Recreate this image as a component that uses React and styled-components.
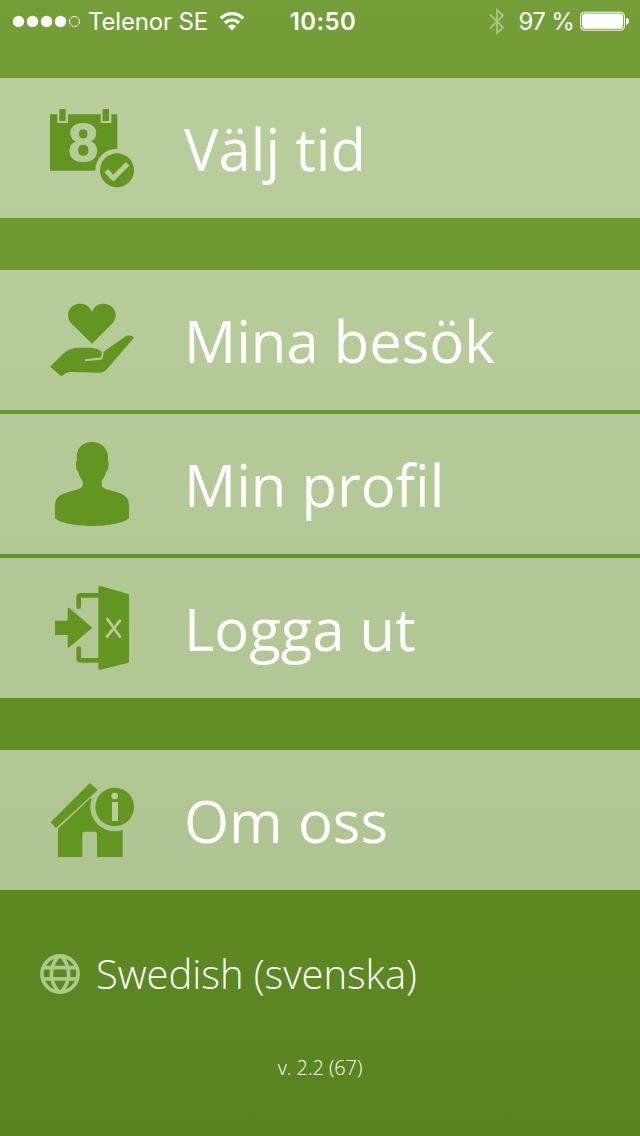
import React from 'react'
import styled, { createGlobalStyle } from 'styled-components'

const theme = {
  icon: '#629621',
  cutout: '#b6cd99',
  text: '#fff',
}

const GlobalStyle = createGlobalStyle`
  body {
    margin: 0;
  }
`

const Screen = styled.div`
  box-sizing: border-box;
  width: 640px;
  height: 1136px;
  overflow: hidden;
  display: flex;
  flex-direction: column;
  color: ${theme.text};
  background: linear-gradient(#749f38, #57841e);
  font-family: 'Open Sans', 'Noto Sans', sans-serif;
`

const StatusBar = styled.header`
  display: grid;
  grid-template-columns: 277px 92px 1fr;
  align-items: center;
  height: 40px;
  margin-bottom: 38px;
  font-family: Inter, 'Liberation Sans', sans-serif;
  font-size: 24px;
  line-height: 40px;
  white-space: nowrap;
`

const StatusGroup = styled.div`
  display: flex;
  align-items: center;
  height: 40px;
  justify-content: ${({ $end }) => ($end ? 'flex-end' : 'flex-start')};
  padding: ${({ $end }) => ($end ? '0 11px 0 0' : '0 0 0 12px')};
`

const StatusText = styled.span`
  padding-top: 2px;
  margin: ${({ $margin }) => $margin || 0};
  letter-spacing: ${({ $spacing }) => $spacing || 0};
`

const Time = styled.div`
  padding-top: 2px;
  text-align: center;
  font-weight: 600;
  letter-spacing: 0.4px;
`

const Menu = styled.nav`
  display: flex;
  flex-direction: column;
  gap: 52px;
`

const MenuGroup = styled.div`
  display: flex;
  flex-direction: column;
  gap: 4px;
`

const MenuItem = styled.a`
  box-sizing: border-box;
  display: flex;
  align-items: center;
  gap: 50px;
  height: 140px;
  padding: 0 50px;
  background: rgba(255, 255, 255, 0.5);
`

const MenuIcon = styled.svg`
  flex: none;
  width: 84px;
  height: 84px;
  fill: ${theme.icon};
`

const Label = styled.span`
  font-size: 58px;
  line-height: 80px;
  padding-top: 1px;
  white-space: nowrap;
`

const Language = styled.div`
  display: flex;
  align-items: center;
  gap: 16px;
  height: 60px;
  margin-top: 54px;
  padding-left: 40px;
  font-size: 40px;
  font-weight: 300;
  line-height: 60px;
  letter-spacing: -0.05px;
`

const Version = styled.footer`
  margin-top: 50px;
  text-align: center;
  font-size: 20px;
  font-weight: 300;
  line-height: 28px;
  letter-spacing: -0.1px;
`

const CalendarIcon = () => (
  <MenuIcon viewBox="60 48 252 252">
    <mask id="calendar">
      <rect x="60" y="48" width="252" height="252" fill="#fff" />
      <path d="M82 48h32v51H82zM212 48h32v51h-32z" fill="#000" />
      <circle cx="261" cy="241" r="65" fill="#000" />
    </mask>
    <path d="M60 73h202v169H60z" mask="url(#calendar)" />
    <path d="M88 57h19v36H88zM218 57h19v36h-19z" />
    <text
      x="160"
      y="213"
      textAnchor="middle"
      fontFamily="Liberation Sans, sans-serif"
      fontWeight="700"
      fontSize="162"
      fill={theme.cutout}
      stroke={theme.cutout}
      strokeWidth="3"
    >
      8
    </text>
    <circle cx="261" cy="241" r="51" />
    <path
      d="M229 242l21 23 43-44"
      fill="none"
      stroke={theme.cutout}
      strokeWidth="15"
      strokeLinejoin="round"
    />
  </MenuIcon>
)

const HandHeartIcon = () => (
  <MenuIcon viewBox="60 24 252 252">
    <path d="M186 161L125 101C116 92 114 84 114 75C114 55 131 41 150 41C168 41 181 51 186 66C191 51 203 41 221 41C241 41 257 56 257 76C257 86 253 94 246 101Z" />
    <path d="M60 230L101 190C113 179 127 173 145 173H180C197 173 209 178 215 185L214 202L165 208L165 214L212 209Q219 208 219 201L221 185L287 139C293 135 307 135 312 143L231 237C224 245 218 248 208 248L124 246Q114 246 108 250L94 259Z" />
  </MenuIcon>
)

const ProfileIcon = () => (
  <MenuIcon viewBox="60 36 252 252">
    <path d="M186 36C211 36 235 54 234 82L233 92Q237 94 236 101L234 117Q233 123 229 124C226 135 221 145 215 153V165C216 178 239 179 259 186C284 193 297 203 297 226V264C286 278 235 288 186 288S85 278 75 264V226C75 202 91 193 115 186C136 179 157 178 158 165V153C151 145 147 135 144 124Q140 122 139 117L138 101Q136 94 141 92L140 82C139 54 160 36 186 36Z" />
  </MenuIcon>
)

const LogoutIcon = () => (
  <MenuIcon viewBox="60 33 252 252">
    <path
      d="M206 61H152Q146 61 146 67V95M146 221V250Q146 256 152 256H206"
      fill="none"
      stroke={theme.icon}
      strokeWidth="14"
      strokeLinecap="round"
    />
    <path d="M75 137H113V101Q113 96 118 99L187 158L118 217Q113 221 113 215V180H75Z" />
    <path d="M205 37Q205 31 211 33L293 56Q297 57 297 61V259Q297 263 293 264L211 284Q205 286 205 280Z" />
    <path
      d="M232 132L270 185M270 137L231 185"
      fill="none"
      stroke={theme.cutout}
      strokeWidth="8"
      strokeLinecap="round"
    />
  </MenuIcon>
)

const HouseInfoIcon = () => (
  <MenuIcon viewBox="60 24 252 252">
    <mask id="house">
      <rect x="60" y="24" width="252" height="252" fill="#fff" />
      <circle cx="254" cy="111" r="73" fill="#000" />
    </mask>
    <g mask="url(#house)">
      <path d="M62 157L180 39L203 60L78 174Z" />
      <path d="M84 176L182 84L278 176V261H201V191Q201 185 195 185H163Q157 185 157 191V261H84Z" />
    </g>
    <circle cx="254" cy="111" r="58" />
    <circle cx="254" cy="78" r="10" fill={theme.cutout} />
    <path d="M246 96h18v57h-18z" fill={theme.cutout} />
  </MenuIcon>
)

const SignalIcon = () => (
  <svg width="70" height="14" viewBox="0 0 70 14" fill="#fff">
    <circle cx="6.5" cy="7.5" r="5.7" />
    <circle cx="20.5" cy="7.5" r="5.7" />
    <circle cx="34.5" cy="7.5" r="5.7" />
    <circle cx="48.5" cy="7.5" r="5.7" />
    <circle cx="62.5" cy="7.5" r="5" fill="none" stroke="#fff" strokeWidth="1" />
  </svg>
)

const WifiIcon = () => (
  <svg width="26" height="20" viewBox="0 0 26 20" fill="none" stroke="#fff" strokeWidth="3.2">
    <path d="M1.8 7.3C8 1 18 1 24.2 7.3" />
    <path d="M6 12C10 8 16 8 20 12" />
    <path d="M13 19.6L8.6 15.2Q13 11.6 17.4 15.2Z" fill="#fff" stroke="none" />
  </svg>
)

const BluetoothIcon = () => (
  <svg width="16" height="27" viewBox="0 0 16 27" fill="none" stroke="#a9c681" strokeWidth="1.8">
    <path d="M1 6.5L14 19.5L8 25V2L14 7.5L1 20.5" />
  </svg>
)

const BatteryIcon = () => (
  <svg width="49" height="20" viewBox="0 0 49 20" fill="#fff">
    <rect x=".6" y="1.2" width="43.8" height="18" rx="3.5" fill="none" stroke="#fff" />
    <rect x="2" y="2.6" width="41" height="15.2" rx="2" />
    <path d="M46 6.8Q49 7.5 49 10.3T46 13.8Z" />
  </svg>
)

const GlobeIcon = () => (
  <svg width="40" height="40" viewBox="0 0 40 40" fill="none" stroke="#abc98a" strokeWidth="3.7">
    <circle cx="20" cy="20" r="18.1" />
    <path d="M20 1C8.5 12 8.5 28 20 39C31.5 28 31.5 12 20 1Z" />
    <path d="M3 13.7H37M3 24.8H37" />
  </svg>
)

const menu = [
  [{ label: 'Välj tid', Icon: CalendarIcon }],
  [
    { label: 'Mina besök', Icon: HandHeartIcon },
    { label: 'Min profil', Icon: ProfileIcon },
    { label: 'Logga ut', Icon: LogoutIcon },
  ],
  [{ label: 'Om oss', Icon: HouseInfoIcon }],
]

const App = () => {
  return (
    <>
      <GlobalStyle />
      <Screen>
        <StatusBar>
          <StatusGroup>
            <SignalIcon />
            <StatusText $margin="0 11px 0 6px" $spacing="-0.15px">Telenor SE</StatusText>
            <WifiIcon />
          </StatusGroup>
          <Time>10:50</Time>
          <StatusGroup $end>
            <BluetoothIcon />
            <StatusText $margin="0 6px 0 13px" $spacing="-0.7px">97 %</StatusText>
            <BatteryIcon />
          </StatusGroup>
        </StatusBar>

        <Menu>
          {menu.map((items, i) => (
            <MenuGroup key={i}>
              {items.map(({ label, Icon }) => (
                <MenuItem key={label}>
                  <Icon />
                  <Label>{label}</Label>
                </MenuItem>
              ))}
            </MenuGroup>
          ))}
        </Menu>

        <Language>
          <GlobeIcon />
          <span>Swedish (svenska)</span>
        </Language>
        <Version>v. 2.2 (67)</Version>
      </Screen>
    </>
  )
}

export default App
